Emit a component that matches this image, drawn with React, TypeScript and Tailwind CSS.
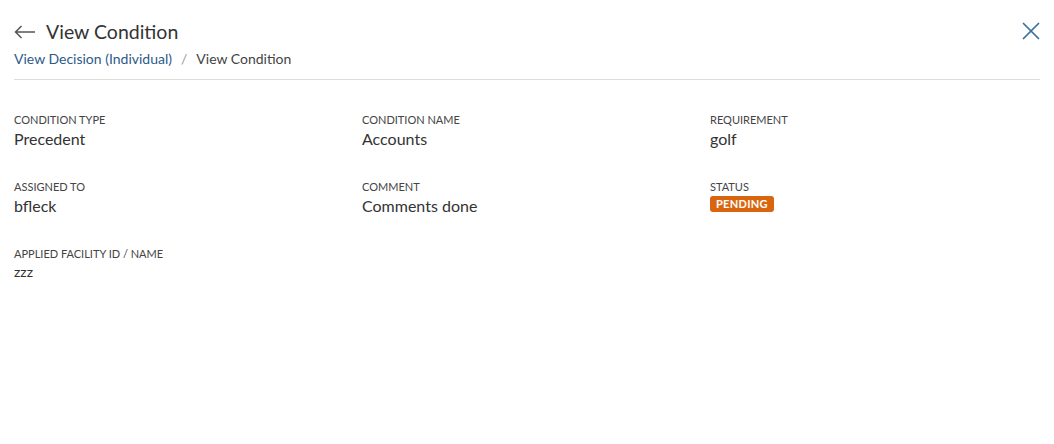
import { X } from 'lucide-react';

const fields = [
  { label: 'Condition Type', value: 'Precedent' },
  { label: 'Condition Name', value: 'Accounts' },
  { label: 'Requirement', value: 'golf' },
  { label: 'Assigned To', value: 'bfleck' },
  { label: 'Comment', value: 'Comments done' },
  { label: 'Status', value: 'PENDING', badge: true },
  { label: 'Applied Facility ID / Name', value: 'zzz', small: true },
];

export default function App() {
  return (
    <div className="w-[1054px] h-[444px] bg-white text-[#333] font-['Lato','Open_Sans',sans-serif]">
      <div className="flex items-start justify-between pl-[14px] pr-[14px] pt-[19px]">
        <div>
          <div className="flex items-center gap-[10px]">
            <svg width="22" height="14" viewBox="0 0 22 14" fill="none" stroke="#555" strokeWidth="1.5">
              <path d="M21 7H1.5M7.5 1L1.5 7l6 6" />
            </svg>
            <h1 className="text-[19.5px] leading-[26px] text-[#333]">View Condition</h1>
          </div>
          <div className="mt-[5px] flex items-center text-[14px] leading-[18px]">
            <a className="text-[#2c5a8a]">View Decision (Individual)</a>
            <span className="mx-[9px] text-[#999]">/</span>
            <span className="text-[#444]">View Condition</span>
          </div>
        </div>
        <X className="mt-[-3px] mr-[-6px] h-[30px] w-[30px] text-[#3b6fa0]" strokeWidth={1.4} />
      </div>
      <div className="mx-[14px] mt-[11px] border-t border-[#dcdcdc]" />
      <div className="grid grid-cols-[348px_348px_1fr] gap-y-[30px] px-[14px] pt-[33px]">
        {fields.map((f) => (
          <div key={f.label}>
            <div className="text-[11px] uppercase leading-[14px] text-[#444]">{f.label}</div>
            {f.badge ? (
              <span className="mt-[2px] block w-fit rounded-[3px] bg-[#d9660e] px-[6px] text-[11px] font-bold leading-[16px] tracking-[0.3px] text-white">
                {f.value}
              </span>
            ) : (
              <div className={f.small ? 'mt-[1px] text-[14px] leading-[20px]' : 'mt-[1px] text-[16px] leading-[22px]'}>
                {f.value}
              </div>
            )}
          </div>
        ))}
      </div>
    </div>
  );
}
